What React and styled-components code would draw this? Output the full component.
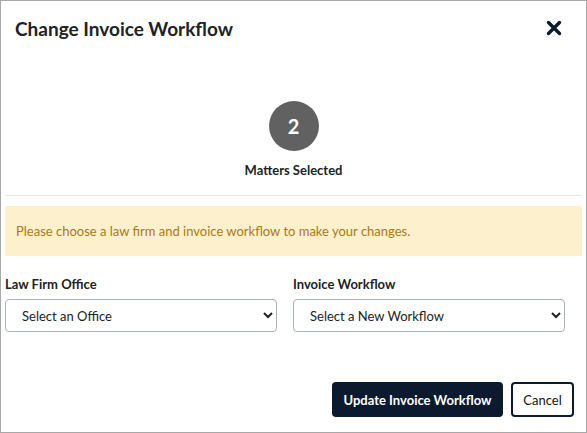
import React from "react";
import styled, { createGlobalStyle } from "styled-components";

const Global = createGlobalStyle`
  html, body { margin: 0; padding: 0; background: #fff; }
  body { font-family: Lato, "Open Sans", sans-serif; color: #222; }
  * { box-sizing: border-box; }
`;

const Frame = styled.div`
  width: 587px;
  height: 433px;
  border: 1px solid #a8a8a8;
  display: flex;
  flex-direction: column;
`;

const Header = styled.div`
  display: flex;
  align-items: center;
  justify-content: space-between;
  height: 54px;
  padding: 0 22px 0 14px;
`;

const Title = styled.h1`
  margin: 0;
  font-size: 19px;
  font-weight: 700;
  color: #222;
`;

const CloseButton = styled.button`
  border: none;
  background: none;
  padding: 0;
  width: 20px;
  height: 20px;
  display: flex;
  align-items: center;
  justify-content: center;
  cursor: pointer;
`;

const Body = styled.div`
  padding: 0 4px;
  display: flex;
  flex-direction: column;
`;

const Summary = styled.div`
  display: flex;
  flex-direction: column;
  align-items: center;
  padding-top: 46px;
  padding-bottom: 17px;
  border-bottom: 1px solid #e6e6e6;
`;

const Count = styled.div`
  width: 50px;
  height: 50px;
  border-radius: 50%;
  background: #616161;
  color: #fff;
  font-size: 20px;
  font-weight: 700;
  display: flex;
  align-items: center;
  justify-content: center;
`;

const SummaryLabel = styled.div`
  margin-top: 11px;
  font-size: 13px;
  font-weight: 700;
  color: #222;
`;

const Alert = styled.div`
  margin-top: 10px;
  height: 50px;
  background: #fdf0cd;
  color: #a9791a;
  font-size: 13px;
  display: flex;
  align-items: center;
  padding-left: 11px;
`;

const Fields = styled.div`
  margin-top: 20px;
  display: grid;
  grid-template-columns: 272px 272px;
  column-gap: 16px;
`;

const Field = styled.div`
  display: flex;
  flex-direction: column;
`;

const Label = styled.label`
  font-size: 13px;
  font-weight: 700;
  color: #222;
  margin-bottom: 7px;
`;

const Select = styled.select`
  height: 33px;
  border: 1px solid #a9b0bb;
  border-radius: 4px;
  background: #fff;
  font-family: Lato, "Open Sans", sans-serif;
  font-size: 13px;
  color: #222;
  padding: 0 6px 0 12px;
`;

const Footer = styled.div`
  margin-top: auto;
  display: flex;
  justify-content: flex-end;
  gap: 8px;
  padding: 0 12px 15px 0;
`;

const Button = styled.button`
  height: 35px;
  border-radius: 4px;
  font-family: Lato, "Open Sans", sans-serif;
  font-size: 13px;
  white-space: nowrap;
  font-weight: ${(p) => (p.$primary ? 700 : 400)};
  background: ${(p) => (p.$primary ? "#0b1a2e" : "#fff")};
  color: ${(p) => (p.$primary ? "#fff" : "#111")};
  border: ${(p) => (p.$primary ? "none" : "2px solid #0b1a2e")};
  padding: 0;
  width: ${(p) => (p.$primary ? "171px" : "63px")};
  cursor: pointer;
`;

export default function App() {
  return (
    <>
      <Global />
      <Frame>
        <Header>
          <Title>Change Invoice Workflow</Title>
          <CloseButton aria-label="Close">
            <svg width="16" height="16" viewBox="0 0 16 16">
              <path d="M2.5 2.5 L13.5 13.5 M13.5 2.5 L2.5 13.5" stroke="#0b1a2e" strokeWidth="3.4" strokeLinecap="round" />
            </svg>
          </CloseButton>
        </Header>
        <Body>
          <Summary>
            <Count>2</Count>
            <SummaryLabel>Matters Selected</SummaryLabel>
          </Summary>
          <Alert>Please choose a law firm and invoice workflow to make your changes.</Alert>
          <Fields>
            <Field>
              <Label>Law Firm Office</Label>
              <Select defaultValue="">
                <option value="">Select an Office</option>
              </Select>
            </Field>
            <Field>
              <Label>Invoice Workflow</Label>
              <Select defaultValue="">
                <option value="">Select a New Workflow</option>
              </Select>
            </Field>
          </Fields>
        </Body>
        <Footer>
          <Button $primary>Update Invoice Workflow</Button>
          <Button>Cancel</Button>
        </Footer>
      </Frame>
    </>
  );
}
